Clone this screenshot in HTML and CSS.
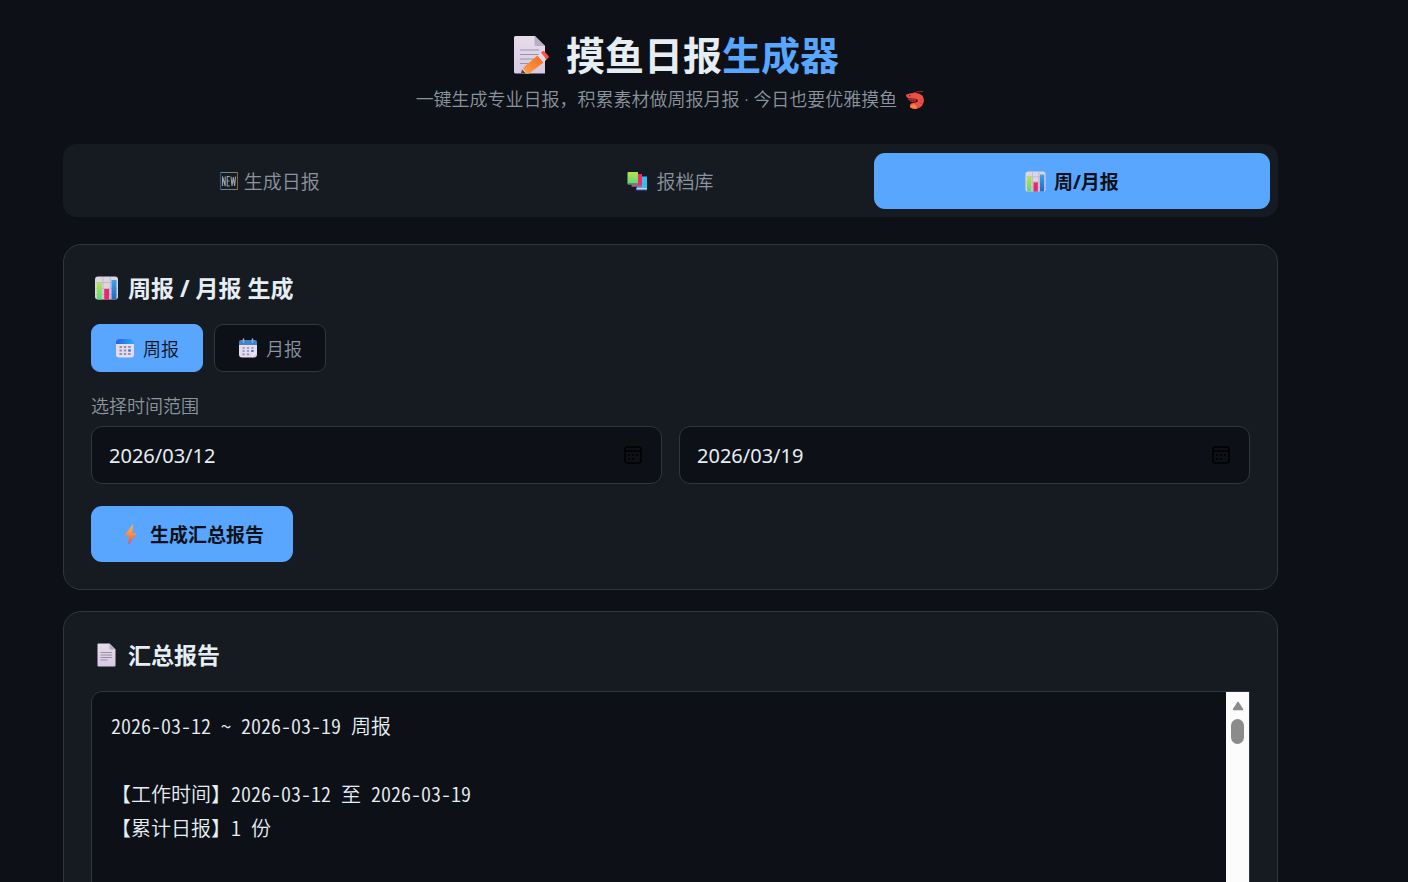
FILE: index.html
```html
<!DOCTYPE html>
<html lang="zh-CN">
<head>
<meta charset="utf-8">
<title>摸鱼日报生成器</title>
<meta name="viewport" content="width=device-width, initial-scale=1">
<link rel="stylesheet" href="styles.css">
</head>
<body>
<svg class="defs" aria-hidden="true">
  <defs>
    <linearGradient id="paper" x1="0" y1="0" x2="0" y2="1"><stop offset="0" stop-color="#e6ddec"/><stop offset="1" stop-color="#d6c9e2"/></linearGradient>
    <linearGradient id="green" x1="0" y1="0" x2="0" y2="1"><stop offset="0" stop-color="#b4e34c"/><stop offset="1" stop-color="#5fd67c"/></linearGradient>
    <linearGradient id="blue" x1="0" y1="0" x2="0" y2="1"><stop offset="0" stop-color="#3aa5ea"/><stop offset="1" stop-color="#2467bd"/></linearGradient>
    <linearGradient id="header" x1="0" y1="0" x2="1" y2="0"><stop offset="0" stop-color="#2461dc"/><stop offset="1" stop-color="#2ba9ff"/></linearGradient>
    <linearGradient id="bolt" x1="0" y1="0" x2="0" y2="1"><stop offset="0" stop-color="#ffb648"/><stop offset=".5" stop-color="#ff8a3c"/><stop offset="1" stop-color="#f1484c"/></linearGradient>
    <linearGradient id="pencil" x1="0" y1="1" x2="1" y2="0"><stop offset="0" stop-color="#ffa04a"/><stop offset="1" stop-color="#f36a22"/></linearGradient>
    <symbol id="i-chart" viewBox="0 0 24 24">
      <rect x=".5" y=".5" width="23" height="23" rx="3" fill="#ddd5e2"/>
      <path d="M1 6.500h22M1 12.500h22M1 18.500h22M8.500 1v22M15.800 1v22" stroke="#bdb3c6" stroke-width=".8"/>
      <path d="M2.300 6.500h5v17H3.500q-1.200-.3-1.200-1.500z" fill="url(#green)"/>
      <path d="M9.700 13h5v10.500h-5z" fill="#e8276f"/>
      <path d="M17 4h5v18q0 1.200-1.200 1.500H17z" fill="url(#blue)"/>
    </symbol>
  </defs>
</svg>

<div class="app">
  <header class="hero">
    <h1 class="hero-title">
      <svg class="icon-memo" viewBox="0 0 38 40" aria-hidden="true">
        <path d="M2.500 1H22l10 10v27.500H2.500Q1 38.500 1 37V2.500Q1 1 2.500 1z" fill="url(#paper)"/>
        <path d="M21.500 1L32 11H23q-1.500 0-1.500-1.500z" fill="#b9adc5"/>
        <path d="M7.500 15h18M7.500 19.500h18M7.500 24h14M7.500 28.500h9" stroke="#9c91a6" stroke-width="1.200" stroke-linecap="round"/>
        <path d="M8.500 38.500l1.500-6 6 6z" fill="#f7cf9f"/><path d="M8 38.500l1-4 4 4z" fill="#493b49"/>
        <path d="M9.800 33L24.500 20.500l6 7L16 38.500h-2z" fill="url(#pencil)"/>
        <path d="M24.500 20.500l3.500-3 5.500 7-3 3z" fill="#e5d9e9"/>
        <path d="M28 17.500l1.500-1.200q1-.8 2 .3l4 4.500q.8 1.200-.2 2l-1.800 1.400z" fill="#fb5148"/>
      </svg>
      <span>摸鱼日报<span class="accent">生成器</span></span>
    </h1>
    <p class="hero-sub">
      <span>一键生成专业日报，积累素材做周报月报 · 今日也要优雅摸鱼</span>
      <svg class="icon-shrimp" viewBox="0 0 20 20" aria-hidden="true">
        <path d="M8 3Q12 1.200 18 1.500" fill="none" stroke="#b93935" stroke-width=".8"/>
        <path d="M.8 4.800Q5 2.600 11 3q7.800.8 8 7.300Q18.500 17 12 18.800q-4.500.6-7-1.500l1.200-1.500-1.700-.6q1.500-2.700 5-2.700 3.300 0 3.300-2.300-.3-1.700-3.300-1.500L3.500 8.200Q1 7.300.8 4.800z" fill="#ee5044"/>
        <path d="M2.500 8.500h7.500l1.500 1-.5 2-4 .8-3-1.500z" fill="#b52f32"/>
        <path d="M4 9.500l.8 1.800M6.200 9.500l.5 1.800M8.400 9.500v1.800" stroke="#481d22" stroke-width=".8"/>
        <path d="M18.500 9.500l-3.500.7M18 14l-3.500-1.500M12.500 18.200l-1-3" stroke="#c93840" stroke-width=".7"/>
        <path d="M5 15.800q4-3.200 6.500.2l.5 2.600q-4.500.6-6.800-1.300z" fill="#ff8042"/>
        <circle cx="4.800" cy="5.800" r=".8" fill="#3f2333"/>
      </svg>
    </p>
  </header>

  <nav class="tabs">
    <button class="tab tab-new" type="button">
      <svg class="icon-new" viewBox="0 0 20 20" aria-hidden="true">
        <rect x="1.500" y="1.500" width="17" height="17" fill="none" stroke="#77808a"/>
        <path d="M1.500 1v18" stroke="#245687" stroke-width="1.200"/><path d="M18.500 1v18" stroke="#8b6336"/>
        <path d="M3.500 15V5.500l2.700 9.500V5.500M10.800 5.500H8.200V15h2.600M8.200 10h2.300M12 5.500l1 9.500 1.300-9 1.300 9 1-9.500" fill="none" stroke="#9aa0a6" stroke-width="1.100"/>
      </svg>
      <span>生成日报</span>
    </button>
    <button class="tab" type="button">
      <svg class="icon-books" viewBox="0 0 20 20" aria-hidden="true">
        <path d="M10 5.500h9.500V19H9z" fill="#38bdf0"/><path d="M9 17h10.500v1.800H9z" fill="#d8cbea"/><path d="M9 18.500h10.500v.9H9z" fill="#2870cd"/>
        <path d="M5 3h9.500v12.500H4.500z" fill="#f0286e"/><path d="M4 14h10.500v1.700H4z" fill="#b15a86"/>
        <path d="M1 1h9.500v12H0V2q0-1 1-1z" fill="url(#green)"/><path d="M0 12h10.500v1.800H1q-1 0-1-1z" fill="#638e6d"/>
      </svg>
      <span>报档库</span>
    </button>
    <button class="tab tab-active" type="button">
      <svg class="icon-tab" aria-hidden="true"><use href="#i-chart"/></svg>
      <span>周/月报</span>
    </button>
  </nav>

  <main class="cards">
    <section class="card">
      <h2 class="card-title">
        <svg class="icon-title" aria-hidden="true"><use href="#i-chart"/></svg>
        <span>周报 / 月报 生成</span>
      </h2>
      <div class="modes">
        <button class="mode mode-active" type="button">
          <svg class="icon-mode" viewBox="0 0 20 20" aria-hidden="true">
            <rect x="1" y="1" width="18" height="18.500" rx="3" fill="#e6dcf0"/>
            <path d="M1 6V4q0-3 3-3h12q3 0 3 3v2z" fill="url(#header)"/>
            <path d="M4.500 9h2.400M8.800 9h2.400M13.200 9h2.400M4.500 12.500h2.400M8.800 12.500h2.400M4.500 16h2.400M8.800 16h2.400M13.200 16h2.400" stroke="#988ba5" stroke-width="2"/>
            <path d="M13.200 12.500h2.600" stroke="#247ff0" stroke-width="2.400"/>
          </svg>
          <span>周报</span>
        </button>
        <button class="mode" type="button">
          <svg class="icon-mode" viewBox="0 0 20 20" aria-hidden="true">
            <path d="M1 4h18v11l-4.500 4.500H4q-3 0-3-3z" fill="#e6dcf0"/>
            <path d="M19 14v2.500q0 3-3 3h-2z" fill="#d9cfe2"/><path d="M19 14.500l-4.500 5q-.2-4 1-4.700z" fill="#f0e8f6"/>
            <path d="M1 7V4q0-2 2-2h14q2 0 2 2v3z" fill="#3f85cd"/>
            <path d="M5.500 1v3M14.500 1v3" stroke="#a9aab8" stroke-width="1.600" stroke-linecap="round"/>
            <path d="M4.500 10h2.200M8.900 10h2.200M13.300 10h2.200M4.500 13h2.200M8.900 13h2.200M4.500 16.300h2.200M8.900 16.300h2.200" stroke="#988ba5" stroke-width="1.700"/>
            <path d="M13.200 13h2.400" stroke="#2683e4" stroke-width="2"/>
          </svg>
          <span>月报</span>
        </button>
      </div>

      <label class="field-label" for="date-from">选择时间范围</label>
      <div class="range">
        <div class="date">
          <input class="date-input" id="date-from" type="text" value="2026/03/12">
          <button class="date-button" type="button" aria-label="选择开始日期">
            <svg class="icon-date" viewBox="0 0 18 18" aria-hidden="true"><rect x="1" y="1" width="16" height="16" rx="2.500"/><path d="M1 5h16"/><path class="dots" d="M4.200 9h1.600M8.200 9h1.600M12.200 9h1.600M4.200 13h1.600M8.200 13h1.600"/></svg>
          </button>
        </div>
        <div class="date">
          <input class="date-input" type="text" value="2026/03/19" aria-label="结束日期">
          <button class="date-button" type="button" aria-label="选择结束日期">
            <svg class="icon-date" viewBox="0 0 18 18" aria-hidden="true"><rect x="1" y="1" width="16" height="16" rx="2.500"/><path d="M1 5h16"/><path class="dots" d="M4.200 9h1.600M8.200 9h1.600M12.200 9h1.600M4.200 13h1.600M8.200 13h1.600"/></svg>
          </button>
        </div>
      </div>

      <button class="generate" type="button">
        <svg class="icon-bolt" viewBox="0 0 20 20" aria-hidden="true"><path d="M11.800.8L4.800 10.200q-.4.800.5.800H9l-1.200 8q0 .8.700.2l7-9.800q.4-.9-.5-.9h-3.500l1-7.300q-.1-.8-.7-.4z" fill="url(#bolt)"/></svg>
        <span>生成汇总报告</span>
      </button>
    </section>

    <section class="card">
      <h2 class="card-title">
        <svg class="icon-title" viewBox="0 0 24 24" aria-hidden="true">
          <path d="M4 .5h11l6 6v16q0 1-1 1H4q-1 0-1-1v-21q0-1 1-1z" fill="url(#paper)"/>
          <path d="M15 .5l6 6h-5q-1 0-1-1z" fill="#b8acc3"/>
          <path d="M6 9.500h11.500M6 12h11.500M6 14.500h11.500M6 17h7" stroke="#998ca4" stroke-width="1"/>
        </svg>
        <span>汇总报告</span>
      </h2>
      <div class="report">
        <pre class="report-text">2026-03-12 ~ 2026-03-19 周报

【工作时间】2026-03-12 至 2026-03-19
【累计日报】1 份</pre>
        <div class="scroll" aria-hidden="true">
          <svg class="scroll-arrow" viewBox="0 0 12 10"><path d="M6 1.500L10.500 8.500h-9z" fill="#8b8b8b" stroke="#8b8b8b" stroke-width="1.500" stroke-linejoin="round"/></svg>
          <div class="scroll-thumb"></div>
        </div>
      </div>
    </section>
  </main>
</div>
</body>
</html>
```
FILE: styles.css
```css
* { box-sizing: border-box; }

body {
  margin: 0;
  height: 100vh;
  overflow: hidden;
  background: #0d1117;
  color: #e6edf3;
  font-family: "Noto Sans", "Noto Sans CJK SC", sans-serif;
  font-size: 18px;
}

button, input { font: inherit; }
button { border: 0; cursor: pointer; }
svg { display: block; flex: none; }
h1, h2, p, pre { margin: 0; }

.defs { position: absolute; width: 0; height: 0; }

.app { padding: 27px 130px 28px 63px; }

.hero { display: flex; flex-direction: column; align-items: center; margin-bottom: 28px; }
.hero-title {
  display: flex;
  align-items: center;
  gap: 15px;
  padding-left: 11px;
  font-size: 39px;
  line-height: 56px;
  font-weight: 700;
}
.accent { color: #58a6ff; }
.hero-sub {
  display: flex;
  align-items: center;
  gap: 8px;
  color: #8b949e;
  font-weight: 350;
  line-height: 33px;
}
.icon-memo { width: 38px; height: 40px; }
.icon-shrimp { width: 20px; height: 20px; }

.tabs {
  display: flex;
  gap: 5px;
  padding: 9px 8px 8px;
  margin-bottom: 27px;
  border-radius: 14px;
  background: #161b22;
}
.tab {
  flex: 1;
  display: flex;
  align-items: center;
  justify-content: center;
  gap: 8px;
  height: 56px;
  padding: 0;
  border-radius: 11px;
  background: transparent;
  color: #8b949e;
  font-size: 19px;
  font-weight: 350;
}
.tab-new { gap: 5px; }
.tab-active { background: #58a6ff; color: #0d1117; font-weight: 700; }
.icon-new { width: 20px; height: 20px; }
.icon-books { width: 21px; height: 20px; }
.icon-tab { width: 21px; height: 21px; }

.cards { display: flex; flex-direction: column; gap: 21px; }
.card {
  padding: 27px;
  border: 1px solid #30363d;
  border-radius: 18px;
  background: #161b22;
}
.card-title {
  display: flex;
  align-items: center;
  gap: 9px;
  padding-left: 3px;
  margin-bottom: 20px;
  font-size: 23px;
  line-height: 32px;
  font-weight: 700;
}
.icon-title { width: 25px; height: 24px; }

.modes { display: flex; gap: 11px; margin-bottom: 20px; }
.mode {
  display: flex;
  align-items: center;
  gap: 8px;
  height: 48px;
  padding: 0 23px;
  border: 1px solid #30363d;
  border-radius: 9px;
  background: #0d1117;
  color: #8b949e;
  font-weight: 350;
}
.mode-active { border-color: #58a6ff; background: #58a6ff; color: #0d1117; }
.icon-mode { width: 20px; height: 20px; }

.field-label {
  display: block;
  margin-bottom: 6px;
  color: #8b949e;
  font-weight: 350;
  line-height: 28px;
}
.range { display: flex; gap: 17px; margin-bottom: 22px; }
.date {
  flex: 1;
  display: flex;
  align-items: center;
  height: 58px;
  padding: 0 19px 0 17px;
  border: 1px solid #30363d;
  border-radius: 11px;
  background: #0d1117;
}
.date-input {
  flex: 1;
  min-width: 0;
  padding: 0;
  border: 0;
  outline: 0;
  background: transparent;
  color: #e6edf3;
  font-size: 20px;
}
.date-button { padding: 0; background: transparent; }
.icon-date { width: 18px; height: 18px; fill: none; stroke: #000; stroke-width: 1.5; }
.dots { stroke-width: 2; }

.generate {
  display: flex;
  align-items: center;
  gap: 9px;
  height: 56px;
  padding: 0 29px;
  border-radius: 11px;
  background: #58a6ff;
  color: #0d1117;
  font-size: 19px;
  font-weight: 700;
}
.icon-bolt { width: 21px; height: 21px; }

.report {
  display: flex;
  min-height: 460px;
  border: 1px solid #30363d;
  border-radius: 11px 0 0 11px;
  background: #0d1117;
}
.report-text {
  flex: 1;
  padding: 17px 19px;
  font-family: "Noto Sans CJK SC", sans-serif;
  font-feature-settings: "hwid";
  font-size: 20px;
  font-weight: 350;
  line-height: 34px;
  white-space: pre-wrap;
}
.scroll {
  display: flex;
  flex-direction: column;
  align-items: center;
  gap: 8px;
  width: 23px;
  padding-top: 9px;
  background: #fcfcfc;
}
.scroll-arrow { width: 12px; height: 10px; }
.scroll-thumb { width: 13px; height: 25px; border-radius: 7px; background: #8b8b8b; }
```
